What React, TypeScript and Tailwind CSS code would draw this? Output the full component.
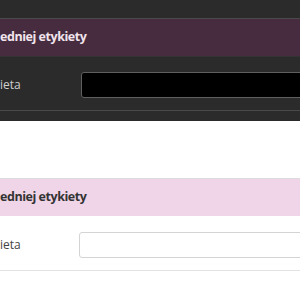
const font = { fontFamily: '"Open Sans", "Noto Sans", sans-serif' };

function LabelPanel({ dark }: { dark: boolean }) {
  return (
    <div
      className={`border-t ${dark ? "border-[#4a4a4a]" : "border-[#dcdcdc]"}`}
    >
      <div
        className={`flex h-[37px] items-center text-[12.5px] font-bold tracking-[-0.45px] ${
          dark ? "bg-[#472c3f] text-[#f1e4ec]" : "bg-[#f0d5e8] text-[#333333]"
        }`}
      >
        <p className="whitespace-nowrap">edniej etykiety</p>
      </div>
      <div
        className={`flex items-center pt-[15px] pb-[12px] border-t ${
          dark ? "border-[#333333]" : "border-white"
        }`}
      >
        <p
          className={`${dark ? "w-[81px] text-[#cfcfcf]" : "w-[79px] text-[#444444]"} text-[12px]`}
        >
          ieta
        </p>
        <input
          readOnly
          className={`-mr-[12px] h-[26px] flex-1 rounded-[3px] border outline-none ${
            dark ? "border-[#5f5f5f] bg-black" : "border-[#d4d4d4] bg-white"
          }`}
        />
      </div>
      <div className={`h-px ${dark ? "bg-[#4a4a4a]" : "bg-[#e3e3e3]"}`} />
    </div>
  );
}

export default function App() {
  return (
    <div className="h-[300px] w-[300px] overflow-hidden bg-white" style={font}>
      <div className="bg-[#2b2b2b] pt-[18px] pb-[10px]">
        <LabelPanel dark />
      </div>
      <div className="pt-[57px]">
        <LabelPanel dark={false} />
      </div>
    </div>
  );
}
